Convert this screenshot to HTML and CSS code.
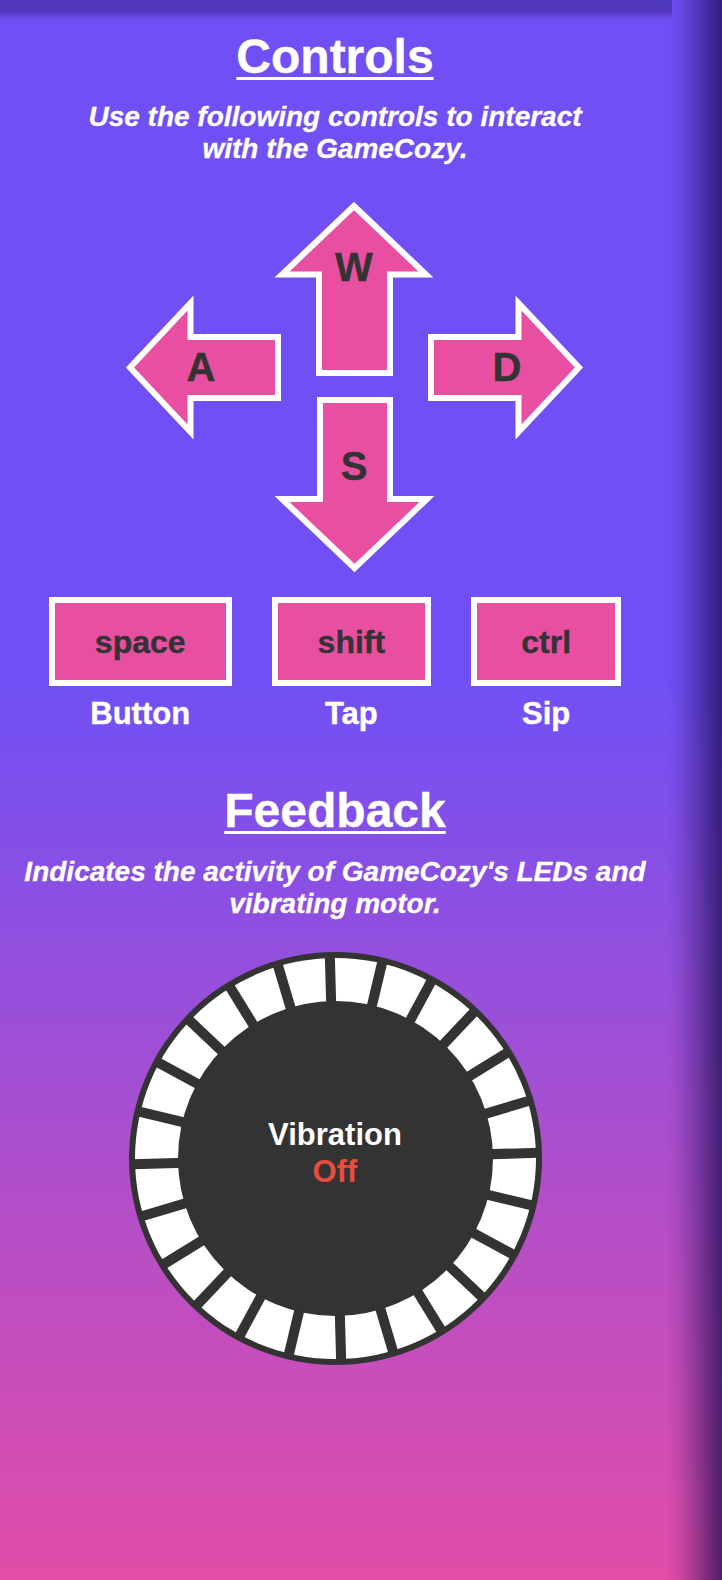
FILE: index.html
```html
<!DOCTYPE html>
<html lang="en">
<head>
<meta charset="utf-8">
<title>GameCozy Controls</title>
<link rel="stylesheet" href="styles.css">
</head>
<body>
<div class="page">
  <main class="main">
    <section class="controls">
      <h1 class="title">Controls</h1>
      <p class="lead lead-narrow">Use the following controls to interact with the GameCozy.</p>
      <svg class="dpad" width="670" height="384" viewBox="0 196 670 384" xmlns="http://www.w3.org/2000/svg">
        <g class="arrow">
          <polygon points="354,206 426,274.5 390,274.5 390,373 319,373 319,274.5 282,274.5"/>
          <polygon points="320,400 390,400 390,499 427,499 354.5,568 282,499 320,499"/>
          <polygon points="130,367.5 190.5,303 190.5,337 278,337 278,398 190.5,398 190.5,432"/>
          <polygon points="431,337 518.5,337 518.5,303 579,367.5 518.5,432 518.5,398 431,398"/>
        </g>
        <text class="dpad-key" x="354" y="281">W</text>
        <text class="dpad-key" x="201" y="381">A</text>
        <text class="dpad-key" x="507" y="381">D</text>
        <text class="dpad-key" x="354" y="480">S</text>
      </svg>
      <div class="keys">
        <div class="key-item">
          <div class="key">space</div>
          <div class="key-label">Button</div>
        </div>
        <div class="key-item">
          <div class="key">shift</div>
          <div class="key-label">Tap</div>
        </div>
        <div class="key-item">
          <div class="key">ctrl</div>
          <div class="key-label">Sip</div>
        </div>
      </div>
    </section>
    <section class="feedback">
      <h2 class="title">Feedback</h2>
      <p class="lead">Indicates the activity of GameCozy's LEDs and vibrating motor.</p>
      <div class="ring">
        <svg class="ring-svg" width="413" height="413" viewBox="0 0 413 413" xmlns="http://www.w3.org/2000/svg">
          <circle cx="206.5" cy="206.5" r="206.5" fill="#333333"/>
          <circle cx="206.5" cy="206.5" r="200.5" fill="#ffffff"/>
          <g transform="translate(206.5 206.5) rotate(-1.6)" fill="#333333">
            <rect x="-5" y="-203" width="10" height="406" transform="rotate(0)"/>
            <rect x="-5" y="-203" width="10" height="406" transform="rotate(15)"/>
            <rect x="-5" y="-203" width="10" height="406" transform="rotate(30)"/>
            <rect x="-5" y="-203" width="10" height="406" transform="rotate(45)"/>
            <rect x="-5" y="-203" width="10" height="406" transform="rotate(60)"/>
            <rect x="-5" y="-203" width="10" height="406" transform="rotate(75)"/>
            <rect x="-5" y="-203" width="10" height="406" transform="rotate(90)"/>
            <rect x="-5" y="-203" width="10" height="406" transform="rotate(105)"/>
            <rect x="-5" y="-203" width="10" height="406" transform="rotate(120)"/>
            <rect x="-5" y="-203" width="10" height="406" transform="rotate(135)"/>
            <rect x="-5" y="-203" width="10" height="406" transform="rotate(150)"/>
            <rect x="-5" y="-203" width="10" height="406" transform="rotate(165)"/>
          </g>
          <circle cx="206.5" cy="206.5" r="157.5" fill="#333333"/>
        </svg>
        <div class="ring-text">
          <div class="vib">Vibration</div>
          <div class="off">Off</div>
        </div>
      </div>
    </section>
  </main>
</div>
</body>
</html>
```

FILE: styles.css
```css
* {
  box-sizing: border-box;
}

html, body {
  margin: 0;
  padding: 0;
}

body {
  font-family: "Liberation Sans", Arimo, Arial, Helvetica, sans-serif;
  color: #ffffff;
  background: #7050f5;
}

.page {
  width: 722px;
  min-height: 1580px;
  background:
    linear-gradient(to bottom, rgba(30, 18, 95, 0.38) 0px, rgba(30, 18, 95, 0.38) 11px, rgba(30, 18, 95, 0) 20px) 0 0 / 672px 20px no-repeat,
    linear-gradient(to right, rgba(25, 12, 80, 0) 668px, rgba(25, 12, 80, 0.1) 680px, rgba(25, 12, 80, 0.35) 698px, rgba(25, 12, 80, 0.58) 712px, rgba(25, 12, 80, 0.72) 722px),
    linear-gradient(to bottom, #7050f5 0px, #7050f5 680px, #e24da8 1580px);
}

.main {
  width: 670px;
  display: flex;
  flex-direction: column;
  align-items: center;
  text-align: center;
}

.controls,
.feedback {
  width: 100%;
  display: flex;
  flex-direction: column;
  align-items: center;
}

.controls {
  padding-top: 29px;
}

.feedback {
  padding-top: 51px;
}

.title {
  margin: 0;
  font-size: 48px;
  line-height: 55px;
  font-weight: 700;
  text-decoration: underline;
  text-decoration-thickness: 3px;
  text-underline-offset: 4px;
  -webkit-text-stroke: 0.4px #ffffff;
}

.lead {
  margin: 17px 0 0;
  font-size: 28px;
  line-height: 32px;
  font-weight: 700;
  font-style: italic;
  -webkit-text-stroke: 0.3px #ffffff;
}

.feedback .lead {
  margin-top: 18px;
}

.lead-narrow {
  width: 530px;
}

.dpad {
  display: block;
  margin-top: 31px;
}

.arrow polygon {
  fill: #e94fa1;
  stroke: #ffffff;
  stroke-width: 6;
  stroke-linejoin: miter;
}

.dpad-key {
  font-family: "Liberation Sans", Arimo, Arial, Helvetica, sans-serif;
  font-size: 40px;
  font-weight: 700;
  fill: #333333;
  stroke: #333333;
  stroke-width: 0.4px;
  text-anchor: middle;
}

.keys {
  display: flex;
  justify-content: center;
  gap: 40px;
  margin-top: 17px;
}

.key-item {
  display: flex;
  flex-direction: column;
  align-items: center;
}

.key {
  min-width: 150px;
  height: 89px;
  padding: 2px 40px 0;
  border: 6px solid #ffffff;
  background: #e94fa1;
  color: #333333;
  font-size: 32px;
  font-weight: 700;
  display: flex;
  align-items: center;
  justify-content: center;
  -webkit-text-stroke: 0.4px #333333;
}

.key-label {
  margin-top: 10px;
  font-size: 31px;
  line-height: 36px;
  font-weight: 700;
  -webkit-text-stroke: 0.4px #ffffff;
}

.ring {
  margin-top: 32px;
  width: 413px;
  height: 413px;
  display: grid;
}

.ring-svg,
.ring-text {
  grid-area: 1 / 1;
}

.ring-svg {
  display: block;
}

.ring-text {
  display: flex;
  flex-direction: column;
  align-items: center;
  justify-content: center;
  padding-bottom: 12px;
  font-size: 31px;
  line-height: 37px;
  font-weight: 700;
}

.vib {
  color: #ffffff;
}

.off {
  color: #e74c3c;
}
```
